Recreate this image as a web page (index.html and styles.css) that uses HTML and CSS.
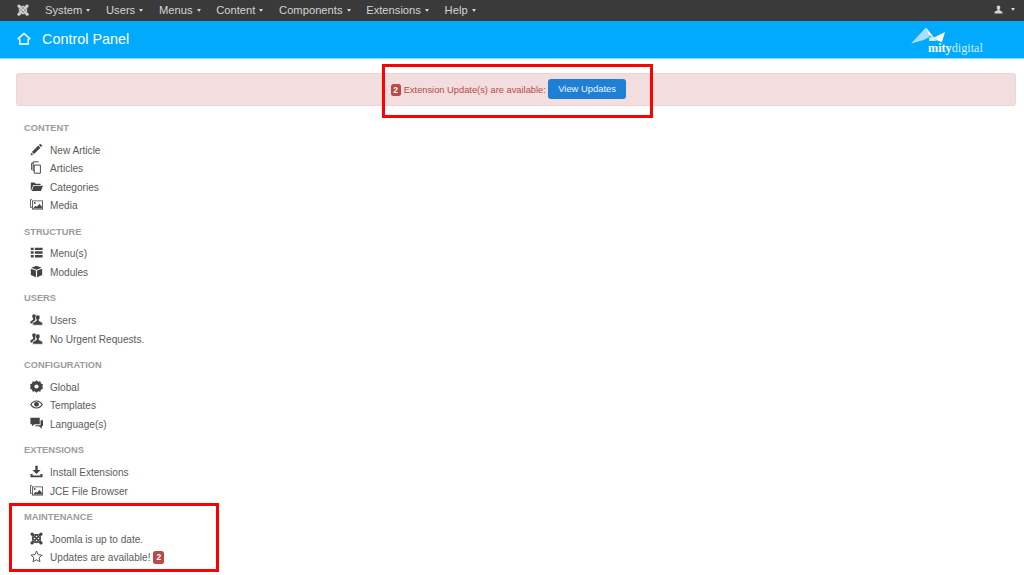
FILE: index.html
```html
<!DOCTYPE html>
<html lang="en">
<head>
<meta charset="utf-8">
<title>Control Panel</title>
<link rel="stylesheet" href="styles.css">
</head>
<body>
<svg class="defs" width="0" height="0" aria-hidden="true">
  <symbol id="i-joomla" viewBox="0 0 16 16">
    <g fill="none" stroke="currentColor">
      <path stroke-width="1.900" d="M2.500 2.500L13.500 13.500M13.500 2.500L2.500 13.500"/>
      <path stroke-width="1.500" d="M8 3.200L12.800 8 8 12.800 3.200 8z"/>
      <path stroke-width="1.100" d="M2.500 2.500Q8 4.200 13.500 2.500Q11.800 8 13.500 13.500Q8 11.800 2.500 13.500Q4.200 8 2.500 2.500z"/>
    </g>
    <circle cx="2.500" cy="2.500" r="2" fill="currentColor"/><circle cx="13.500" cy="2.500" r="2" fill="currentColor"/>
    <circle cx="2.500" cy="13.500" r="2" fill="currentColor"/><circle cx="13.500" cy="13.500" r="2" fill="currentColor"/>
  </symbol>
  <symbol id="i-pencil" viewBox="0 0 16 16"><path fill="currentColor" d="M12.600.8l2.600 2.600-1.600 1.600-2.600-2.600zM10.200 3.200l2.600 2.600L5 13.600 2.400 11zM1.700 11.900l2.400 2.400-3.400 1z"/></symbol>
  <symbol id="i-stack" viewBox="0 0 16 16"><path fill="none" stroke="currentColor" stroke-width="1.200" d="M2 11V2.600h1.900M3.900 12.500V1h6.500M5.200 5h7.600v10H5.200z"/></symbol>
  <symbol id="i-folder" viewBox="0 0 16 16"><path fill="currentColor" d="M1 3h4.500l1.300 1.500H13V6H4L1.600 12.500H1zM4.600 7H16l-2.600 6.500H2.200z"/></symbol>
  <symbol id="i-image" viewBox="0 0 16 16"><path fill="none" stroke="currentColor" stroke-width="1" d="M2.600 2H.6v9.500h2"/><path fill="currentColor" fill-rule="evenodd" d="M2.500 3H16v11H2.500zM3.500 4v9h11.500V4z"/><circle cx="5.800" cy="6" r="1.200" fill="currentColor"/><path fill="currentColor" d="M4 12.500l3-3 1.500 1.200 3-3.400 3 3.200v2z"/></symbol>
  <symbol id="i-list" viewBox="0 0 16 16"><path fill="currentColor" d="M1 2h3.500v3H1zM6 2h9.500v3H6zM1 6.500h3.500v3H1zM6 6.500h9.500v3H6zM1 11h3.500v3H1zM6 11h9.500v3H6z"/></symbol>
  <symbol id="i-cube" viewBox="0 0 16 16"><path fill="currentColor" d="M8 1l6.500 2.300L8 5.700 1.500 3.300zM1 4.500l6.300 2.400V15L1 12.300zM15 4.500L8.700 6.900V15l6.300-2.700z"/></symbol>
  <symbol id="i-users" viewBox="0 0 16 16"><path fill="currentColor" d="M5 1.500c1.400 0 2.300 1 2.300 2.500 0 1-.4 1.800-1 2.400v1.200L7 8.500l-3.500 2.500V13H.5v-2.600l3.200-2V6.400c-.6-.6-1-1.400-1-2.400 0-1.500.9-2.500 2.300-2.500z"/><path fill="currentColor" stroke="#fff" stroke-width=".7" d="M9.700 2.500c1.600 0 2.600 1.100 2.600 2.800 0 1.100-.4 2.100-1.200 2.800v1.500l4.400 2.400V15H3.400v-3l4.500-2.400V8.100c-.8-.7-1.200-1.700-1.200-2.800 0-1.700 1.400-2.800 3-2.800z"/></symbol>
  <symbol id="i-cog" viewBox="0 0 16 16"><path fill="currentColor" fill-rule="evenodd" d="M8 .3l2 1.900 2.700-.6.800 2.700 2.400.9-.6 2.800.6 2.800-2.400.9-.8 2.700-2.700-.6-2 1.900-2-1.900-2.700.6-.8-2.700-2.400-.9.600-2.800-.6-2.800 2.400-.9.800-2.700 2.700.6zM8 5.400a2.600 2.600 0 1 0 0 5.200 2.600 2.600 0 0 0 0-5.200z"/></symbol>
  <symbol id="i-eye" viewBox="0 0 16 16"><path fill="currentColor" fill-rule="evenodd" d="M8 3c3.500 0 6.300 2.200 8 5-1.700 2.800-4.500 5-8 5s-6.300-2.200-8-5c1.700-2.800 4.500-5 8-5zM1.800 8C3.200 10 5.400 11.700 8 11.700S12.800 10 14.200 8C12.800 6 10.600 4.300 8 4.300S3.200 6 1.800 8z"/><circle cx="8" cy="7.800" r="3" fill="currentColor"/></symbol>
  <symbol id="i-comments" viewBox="0 0 16 16"><path fill="currentColor" d="M.5 1h11.500v8H5.500L2.500 11.500V9H.5z"/><path fill="currentColor" d="M13 4h3v7h-1.500v3.500L11 11.500H7l-1-1.300h7z"/></symbol>
  <symbol id="i-download" viewBox="0 0 16 16"><path fill="currentColor" d="M6.500.8h3V6H13L8 11 3 6h3.500zM.6 11h2.600v2h9.600v-2h2.600v4.200H.6z"/></symbol>
  <symbol id="i-star" viewBox="0 0 16 16"><path fill="none" stroke="currentColor" stroke-width="1.100" stroke-linejoin="round" d="M8 1.300l2 4.500 4.900.5-3.700 3.200 1.100 4.900L8 12l-4.300 2.400 1.100-4.900L1.100 6.300 6 5.800z"/></symbol>
  <symbol id="i-home" viewBox="0 0 16 16"><path fill="none" stroke="currentColor" stroke-width="1.700" d="M.8 8.200L8 1.700l7.200 6.500M3.200 8v5.600h9.600V8"/></symbol>
  <symbol id="i-user" viewBox="0 0 16 16"><path fill="currentColor" d="M8 1c2 0 3.200 1.400 3.200 3.500 0 1.500-.6 2.800-1.500 3.500v1.300L15 12v3H1v-3l5.300-2.700V8c-.9-.7-1.500-2-1.500-3.500C4.800 2.400 6 1 8 1z"/></symbol>
</svg>

<nav class="navbar">
  <ul class="nav-left">
    <li class="nav-logo"><svg class="icon-brand"><use href="#i-joomla"/></svg></li>
    <li>System<span class="caret"></span></li>
    <li>Users<span class="caret"></span></li>
    <li>Menus<span class="caret"></span></li>
    <li>Content<span class="caret"></span></li>
    <li>Components<span class="caret"></span></li>
    <li>Extensions<span class="caret"></span></li>
    <li>Help<span class="caret"></span></li>
  </ul>
  <div class="nav-user"><svg class="icon-user"><use href="#i-user"/></svg><span class="caret"></span></div>
</nav>

<header class="header">
  <svg class="icon-home"><use href="#i-home"/></svg>
  <h1 class="title">Control Panel</h1>
  <div class="logo">
    <svg class="logo-mark" viewBox="0 0 36 18" aria-hidden="true">
      <path fill="#a9e0ff" d="M0 16.500L15 .5l3.500 9.500-6 3z"/>
      <path fill="#fff" d="M15 .5l8 10 11-5.500-3 10-3.500-1-3-2-5-3-2-1z"/>
      <path fill="#d6f1ff" d="M18.500 10l4.500.8 3 3-8 .2z"/>
    </svg>
    <div class="logo-text"><b>mity</b><span>digital</span></div>
  </div>
</header>

<main class="content">
  <div class="alert">
    <span class="badge">2</span>
    <span class="alert-text">Extension Update(s) are available:</span>
    <span class="btn">View Updates</span>
  </div>

  <section class="group">
    <h2 class="group-title">CONTENT</h2>
    <ul class="links">
      <li><svg class="icon"><use href="#i-pencil"/></svg>New Article</li>
      <li><svg class="icon"><use href="#i-stack"/></svg>Articles</li>
      <li><svg class="icon"><use href="#i-folder"/></svg>Categories</li>
      <li><svg class="icon"><use href="#i-image"/></svg>Media</li>
    </ul>
  </section>
  <section class="group">
    <h2 class="group-title">STRUCTURE</h2>
    <ul class="links">
      <li><svg class="icon"><use href="#i-list"/></svg>Menu(s)</li>
      <li><svg class="icon"><use href="#i-cube"/></svg>Modules</li>
    </ul>
  </section>
  <section class="group">
    <h2 class="group-title">USERS</h2>
    <ul class="links">
      <li><svg class="icon"><use href="#i-users"/></svg>Users</li>
      <li><svg class="icon"><use href="#i-users"/></svg>No Urgent Requests.</li>
    </ul>
  </section>
  <section class="group">
    <h2 class="group-title">CONFIGURATION</h2>
    <ul class="links">
      <li><svg class="icon"><use href="#i-cog"/></svg>Global</li>
      <li><svg class="icon"><use href="#i-eye"/></svg>Templates</li>
      <li><svg class="icon"><use href="#i-comments"/></svg>Language(s)</li>
    </ul>
  </section>
  <section class="group">
    <h2 class="group-title">EXTENSIONS</h2>
    <ul class="links">
      <li><svg class="icon"><use href="#i-download"/></svg>Install Extensions</li>
      <li><svg class="icon"><use href="#i-image"/></svg>JCE File Browser</li>
    </ul>
  </section>
  <section class="group">
    <h2 class="group-title">MAINTENANCE</h2>
    <ul class="links">
      <li><svg class="icon"><use href="#i-joomla"/></svg>Joomla is up to date.</li>
      <li><svg class="icon"><use href="#i-star"/></svg>Updates are available!<span class="badge badge-after">2</span></li>
    </ul>
  </section>
</main>

<div class="mark mark-alert"></div>
<div class="mark mark-maint"></div>
</body>
</html>
```
FILE: styles.css
```css
* { box-sizing: border-box; }
html, body { margin: 0; padding: 0; height: 575px; overflow: hidden; }
body {
  position: relative;
  background: #fff;
  font-family: "Liberation Sans", Arial, sans-serif;
  font-size: 10.1px;
  color: #5c5c5c;
}
ul { list-style: none; margin: 0; padding: 0; }
h1, h2 { margin: 0; }
.defs { position: absolute; }

.navbar {
  height: 21px;
  background: #3a3a3a;
  color: #d4d4d4;
  display: flex;
  align-items: center;
  justify-content: space-between;
  padding: 0 9px 0 17px;
  font-size: 11.200px;
}
.nav-left { display: flex; align-items: center; }
.nav-left li { margin-right: 15.700px; line-height: 19px; white-space: nowrap; }
.nav-left .nav-logo { display: flex; margin-right: 16px; margin-top: -2px; }
.icon-brand { width: 12px; height: 12px; color: #d4d4d4; }
.caret {
  display: inline-block;
  width: 0;
  height: 0;
  margin-left: 4px;
  vertical-align: 2px;
  border-left: 2.500px solid transparent;
  border-right: 2.500px solid transparent;
  border-top: 3px solid #d4d4d4;
}
.nav-user { display: flex; align-items: center; margin-top: -2px; }
.icon-user { width: 9px; height: 9px; color: #d4d4d4; }
.nav-user .caret { margin-left: 8px; }

.header {
  height: 38px;
  background: #00aaff;
  color: #fff;
  display: flex;
  align-items: center;
  padding: 0 40px 0 16px;
  border-bottom: 1px solid #8fd8ff;
}
.icon-home { width: 16px; height: 14px; color: #fff; margin-right: 10px; margin-top: -2px; }
.title { font-size: 14.400px; font-weight: 400; line-height: 37px; flex: 1; }
.logo { width: 73px; display: flex; flex-direction: column; align-items: flex-start; margin-top: 1px; }
.logo-mark { width: 36px; height: 18px; margin-bottom: -3px; }
.logo-text { font-family: "Liberation Serif", serif; font-size: 12.200px; line-height: 12px; margin-left: 17px; white-space: nowrap; }
.logo-text b { font-weight: 700; }
.logo-text span { font-weight: 400; color: #cdeeff; }

.content { padding: 14px 8px 0 16px; }
.alert {
  height: 33px;
  padding-right: 15px;
  background: #f2dede;
  border: 1px solid #ebd5d5;
  border-radius: 3px;
  color: #b94a48;
  display: flex;
  align-items: center;
  justify-content: center;
  gap: 3px;
  margin-bottom: 14px;
}
.alert-text { font-size: 9.300px; }
.badge {
  display: inline-block;
  min-width: 10px;
  height: 12px;
  padding: 0 2.500px;
  border-radius: 2.500px;
  background: #b94a48;
  color: #fff;
  font-size: 8.500px;
  font-weight: 700;
  line-height: 12px;
  text-align: center;
}
.badge-after { margin-left: 3px; min-width: 11px; height: 13px; line-height: 13px; }
.btn {
  display: block;
  height: 20px;
  margin-left: -1px;
  margin-top: -1px;
  padding: 0 10.400px;
  background: #1d7fd6;
  border-radius: 3px;
  color: #eef6fd;
  font-size: 9.400px;
  line-height: 20px;
}
.group { padding-left: 8px; margin-bottom: 8.700px; }
.group-title {
  font-size: 9.300px;
  font-weight: 700;
  color: #9c9c9c;
  line-height: 16px;
  margin-bottom: 5px;
}
.links li {
  display: flex;
  align-items: center;
  height: 18.500px;
  padding-left: 6px;
  white-space: nowrap;
}
.icon { width: 13px; height: 13px; margin-right: 7px; color: #444; flex: none; margin-top: -2px; }

.mark { position: absolute; border: 3px solid #f00; }
.mark-alert { left: 382px; top: 64px; width: 271px; height: 54px; }
.mark-maint { left: 9px; top: 503px; width: 210px; height: 69px; }
```
